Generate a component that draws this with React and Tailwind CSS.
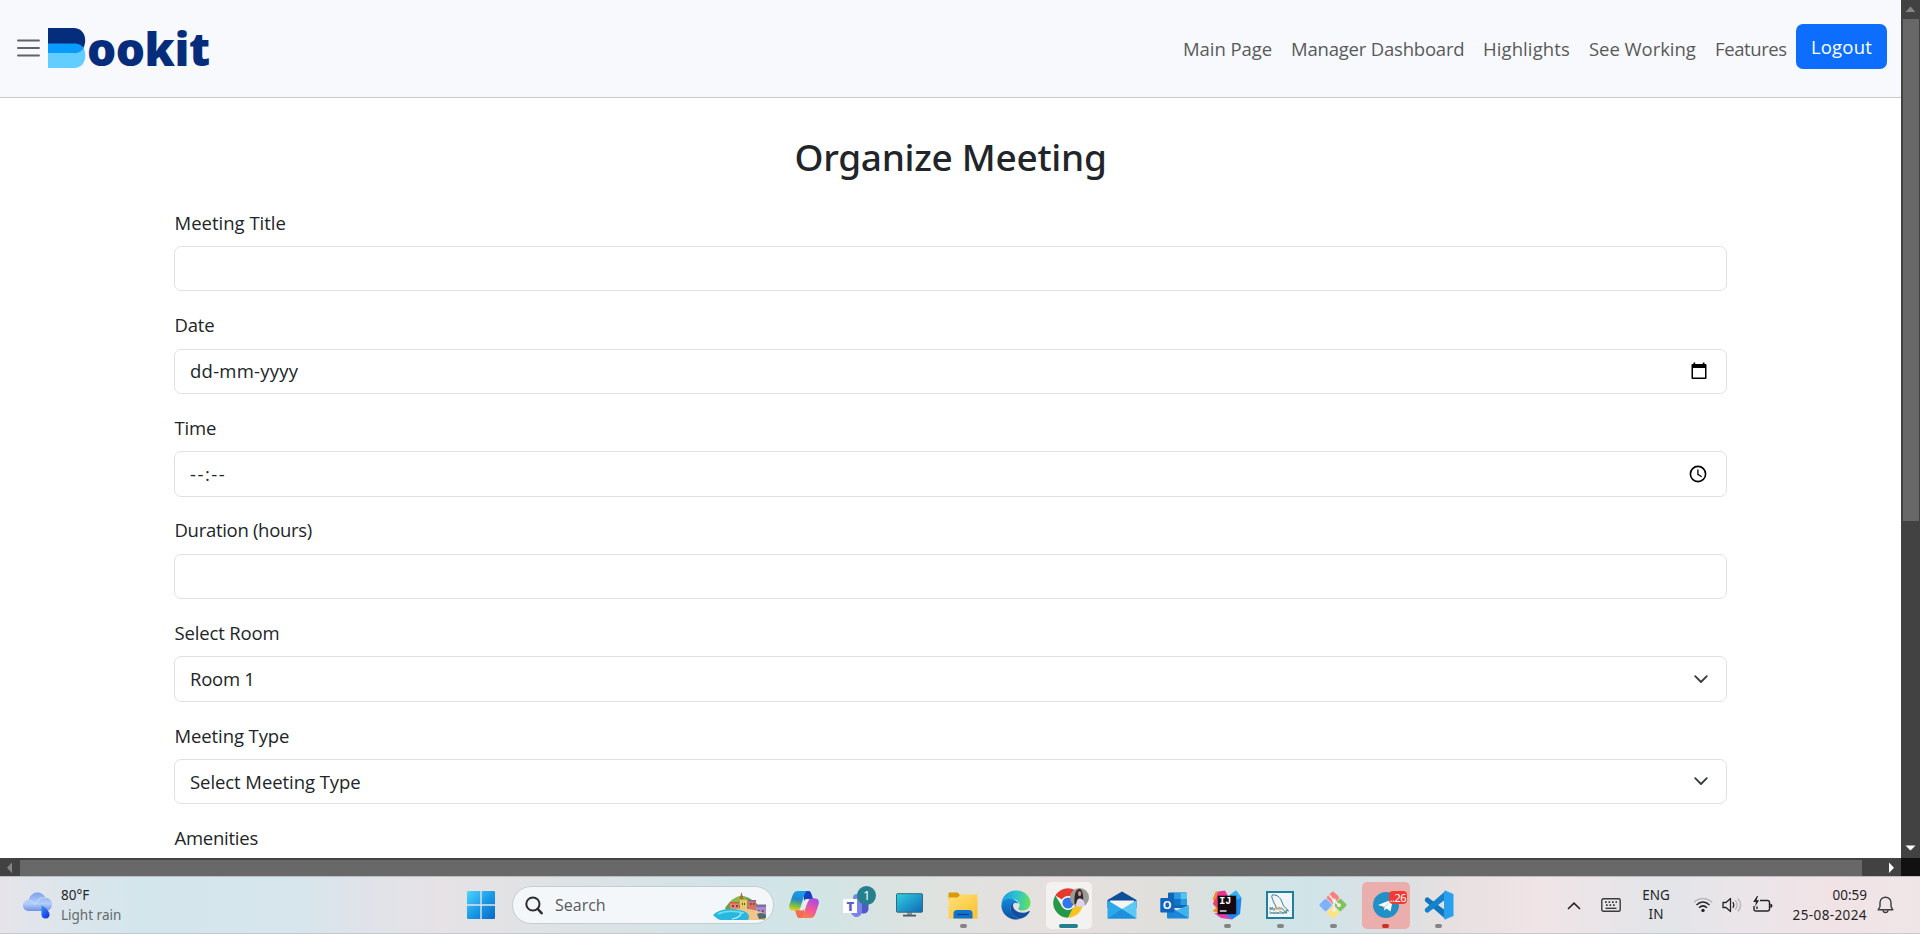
import React from "react";

/* ---------- page header ---------- */

function Logo() {
  return (
    <div className="-mt-[1px] flex items-center">
      <svg className="h-[40px] w-[38px] shrink-0" viewBox="0 0 38 40">
        <path d="M0 15H26C33 15 37.200 20 37.200 26.500V28C37.200 35 33 40 26 40H0Z" fill="#62cdff" />
        <path d="M0 0H25.500C33 0 37.200 5.500 37.200 12.500C37.200 19.500 33 25 25.500 25H0Z" fill="#062d7c" />
        <path d="M0 15.400H26C31 15.400 34.500 17.600 35.800 20.200C33.600 23.400 30 25 25.500 25H0Z" fill="#0a9bff" />
      </svg>
      <span className="ml-[1px] font-['Open_Sans',sans-serif] text-[46px] leading-[60px] font-extrabold tracking-[-0.5px] text-[#062d7c]">
        ookit
      </span>
    </div>
  );
}

function Header() {
  return (
    <header className="flex h-[98px] shrink-0 items-center justify-between border-b border-[#c9cacc] bg-[#f8f9fc] pr-[14px] pl-[17px]">
      <div className="flex items-center gap-[8px]">
        <svg className="-mt-[2px] h-[18px] w-[23px]" viewBox="0 0 23 18" stroke="#626366" strokeWidth="1.9" strokeLinecap="round">
          <path d="M1 1.500H22M1 9H22M1 16.500H22" />
        </svg>
        <Logo />
      </div>
      <nav className="flex items-center text-[18.5px] whitespace-nowrap text-[#58595b]">
        <span className="mt-[1px] w-[108px] tracking-[-0.05px]">Main Page</span>
        <span className="mt-[1px] w-[192px] tracking-[-0.2px]">Manager Dashboard</span>
        <span className="mt-[1px] w-[106px] tracking-[0.1px]">Highlights</span>
        <span className="mt-[1px] w-[126px] tracking-[-0.05px]">See Working</span>
        <span className="mt-[1px] w-[81px] tracking-[-0.4px]">Features</span>
        <button className="-mt-[4px] flex h-[45px] w-[91px] items-center justify-center rounded-[7px] bg-[#0d6efd] tracking-[0.2px] text-white">
          Logout
        </button>
      </nav>
    </header>
  );
}

/* ---------- form ---------- */

function Field({ label, labelClass = "", children }) {
  return (
    <div className="h-[102.6px] shrink-0">
      <div className={"h-[38.300px] pl-[0.5px] leading-[29px] whitespace-nowrap " + labelClass}>{label}</div>
      <div className="flex h-[45.500px] items-center justify-between rounded-[7px] border border-[#dee2e6] bg-white pl-[15px]">
        {children}
      </div>
    </div>
  );
}

function CalendarIcon() {
  return (
    <svg className="mr-[19px] h-[18px] w-[16px]" viewBox="0 0 16 18">
      <path d="M2.500 0.500H4.200V2H11.800V0.500H13.500V2H14.500Q15.500 2 15.500 3V16Q15.500 17 14.500 17H1.500Q0.500 17 0.500 16V3Q0.500 2 1.500 2H2.500ZM2 6V15.600H14V6Z" fillRule="evenodd" />
    </svg>
  );
}

function ClockIcon() {
  return (
    <svg className="mr-[19px] h-[18px] w-[18px]" viewBox="0 0 18 18" fill="none" stroke="#000" strokeWidth="1.6">
      <circle cx="9" cy="9" r="7.600" />
      <path d="M8.900 4.600V9.400L12.700 11.700" strokeWidth="1.300" />
    </svg>
  );
}

function SelectArrow() {
  return (
    <svg className="mr-[18px] h-[9px] w-[14px]" viewBox="0 0 14 9" fill="none" stroke="#343a40" strokeWidth="1.8" strokeLinecap="round" strokeLinejoin="round">
      <path d="M1.200 1.200L7 7L12.800 1.200" />
    </svg>
  );
}

function MeetingForm() {
  return (
    <main className="flex min-h-0 flex-1 flex-col overflow-hidden pt-[36px] pr-[174px] pl-[174px] text-[18.5px] text-[#212529]">
      <h1 className="mb-[28.700px] h-[45px] shrink-0 text-center font-['Noto_Sans',sans-serif] text-[37px] leading-[45px] font-medium tracking-[-0.3px]">
        Organize Meeting
      </h1>
      <Field label="Meeting Title" />
      <Field label="Date" labelClass="tracking-[-0.2px]">
        <span className="tracking-[0.25px]">dd-mm-yyyy</span>
        <CalendarIcon />
      </Field>
      <Field label="Time" labelClass="tracking-[-0.2px]">
        <span className="tracking-[1.500px]">--:--</span>
        <ClockIcon />
      </Field>
      <Field label="Duration (hours)" labelClass="tracking-[-0.3px]" />
      <Field label="Select Room" labelClass="tracking-[-0.15px]">
        <span className="tracking-[-0.25px]">Room 1</span>
        <SelectArrow />
      </Field>
      <Field label="Meeting Type" labelClass="tracking-[-0.1px]">
        <span className="tracking-[-0.07px]">Select Meeting Type</span>
        <SelectArrow />
      </Field>
      <div className="h-[34px] shrink-0 pl-[0.5px] leading-[29px] tracking-[-0.25px]">Amenities</div>
    </main>
  );
}

/* ---------- scrollbars ---------- */

function VerticalScrollbar() {
  return (
    <div className="flex w-[19px] shrink-0 flex-col items-center bg-[#424242]">
      <svg className="h-[19px] w-[19px] shrink-0" viewBox="0 0 19 19">
        <path d="M9.500 6.500L14.500 12H4.500Z" fill="#858585" />
      </svg>
      <div className="ml-[1px] h-[502px] w-[16px] bg-[#686868]" />
      <svg className="mt-auto h-[19px] w-[19px] shrink-0" viewBox="0 0 19 19">
        <path d="M4.500 6.500H14.500L9.500 11.500Z" fill="#fff" />
      </svg>
    </div>
  );
}

function HorizontalScrollbar() {
  return (
    <div className="flex h-[18px] shrink-0 bg-[#424242]">
      <svg className="h-[18px] w-[20px] shrink-0" viewBox="0 0 20 18">
        <path d="M12 4.500V15L7 9.700Z" fill="#858585" />
      </svg>
      <div className="mt-[2px] h-[16px] w-[1842px] bg-[#686868]" />
      <svg className="ml-auto h-[18px] w-[20px] shrink-0" viewBox="0 0 20 18">
        <path d="M8 4.500V15L13 9.700Z" fill="#fff" />
      </svg>
      <div className="w-[19px] bg-[#111]" />
    </div>
  );
}

/* ---------- taskbar ---------- */

function WeatherIcon() {
  return (
    <svg className="h-[29px] w-[31px]" viewBox="0 0 31 29">
      <defs>
        <linearGradient id="cloud" x1="0" y1="0" x2="0" y2="1">
          <stop offset="0" stopColor="#7ba3ec" />
          <stop offset="0.6" stopColor="#b3cdf9" />
          <stop offset="1" stopColor="#6f93e6" />
        </linearGradient>
        <linearGradient id="drop" x1="0" y1="0" x2="0.6" y2="1">
          <stop offset="0" stopColor="#3a9df0" />
          <stop offset="1" stopColor="#1838e8" />
        </linearGradient>
      </defs>
      <path d="M7 20C3 20 1 17.500 1 14.500C1 11 4 9 6.500 9C8 4 11.500 1.500 15.500 1.500C19.500 1.500 22.500 4 23.800 7C27.500 7 30 9.500 30 13.500C30 17.500 27 20 23.500 20Z" fill="url(#cloud)" />
      <path d="M2 12C6 8 12 10 13 14M14 13C15 8 20 6 24 7" stroke="#c9dcfb" strokeWidth="1.500" fill="none" opacity="0.600" />
      <path d="M19.500 14C24 17 27.500 20.500 27.500 23.500C27.500 26 26 27.500 23.500 27.500C21 27.500 19.500 26 19.500 23.500Z" fill="url(#drop)" />
    </svg>
  );
}

function WindowsIcon() {
  return (
    <svg className="h-[28px] w-[28px]" viewBox="0 0 28 28">
      <defs>
        <linearGradient id="win" gradientUnits="userSpaceOnUse" x1="0" y1="0" x2="28" y2="28">
          <stop offset="0" stopColor="#50d4fd" />
          <stop offset="0.5" stopColor="#1a9be8" />
          <stop offset="1" stopColor="#0669c8" />
        </linearGradient>
      </defs>
      <path d="M1 0H13.300V13.300H0V1Q0 0 1 0ZM14.700 0H27Q28 0 28 1V13.300H14.700ZM0 14.700H13.300V28H1Q0 28 0 27ZM14.700 14.700H28V27Q28 28 27 28H14.700Z" fill="url(#win)" />
    </svg>
  );
}

function TownIllustration() {
  return (
    <svg className="mt-[3px] h-[29px] w-[54px]" viewBox="0 0 54 29">
      <path d="M12 16C18 7 24 4 30 4C40 6 46 14 52 19V28H20Z" fill="#6f9e45" />
      <path d="M17 10C22 5 26 3.500 31 4L36 10L22 14Z" fill="#8db84c" />
      <path d="M28.500 0L30.500 7H26.500Z" fill="#b5683c" />
      <rect x="17" y="10" width="9" height="8" fill="#ec8367" />
      <path d="M17 10H26V11.500H17Z" fill="#c75c4a" />
      <rect x="27" y="8" width="7" height="10" fill="#f0c468" />
      <rect x="35" y="8" width="8" height="12" fill="#d97265" />
      <rect x="43" y="14" width="10" height="10" fill="#a48cc9" />
      <path d="M43 14L46 12.500H53V15H43ZM35 8H43V9.500H35Z" fill="#8268a8" />
      <path d="M19 13H21V15H19ZM23 13H25V15H23ZM29 11H30V13H29ZM31 11H32V13H31ZM37 11H38.500V13H37ZM40 11H41.500V13H40ZM45 18H46.500V20H45ZM49 18H50.500V20H49Z" fill="#6d4456" />
      <path d="M18 18C30 15 47 18 53 23V26Q52 28 49 28H32Z" fill="#eec68c" />
      <path d="M44 22C47 20 51 21 53 23V26Q50 27 46 27Z" fill="#4e6a75" />
      <path d="M0 23C6 17 17 16 26 18C34 19 38 23 35 28H8Q5 28 0 23Z" fill="#28b8df" />
      <path d="M5 22C13 18 23 19 31 21" stroke="#6be0f2" strokeWidth="1.500" fill="none" />
      <path d="M28 21C28 24 24 26 19 27" stroke="#c4f5fb" strokeWidth="1.200" fill="none" />
    </svg>
  );
}

function SearchBox() {
  return (
    <div className="flex h-[38px] w-[262px] items-center rounded-full border border-[#c3ced4] bg-[#f4f7f9] pr-[6px] pl-[12px]">
      <svg className="h-[19px] w-[18px]" viewBox="0 0 18 19" fill="none" stroke="#2c2d2f" strokeLinecap="round">
        <circle cx="7.900" cy="8" r="6.600" strokeWidth="2" />
        <path d="M12.800 13L16.600 17.200" strokeWidth="2.500" />
      </svg>
      <span className="ml-[12px] flex-1 text-[16px] text-[#58595b]">Search</span>
      <TownIllustration />
    </div>
  );
}

function CopilotIcon() {
  return (
    <svg className="mb-[2px] h-[27px] w-[30px]" viewBox="0 0 30 27">
      <defs>
        <linearGradient id="cpA" x1="0.3" y1="0" x2="0.1" y2="1">
          <stop offset="0" stopColor="#189bee" />
          <stop offset="0.4" stopColor="#2488cc" />
          <stop offset="0.7" stopColor="#74bb4c" />
          <stop offset="1" stopColor="#f5d514" />
        </linearGradient>
        <linearGradient id="cpB" x1="0.7" y1="0" x2="0.2" y2="1">
          <stop offset="0" stopColor="#a84be8" />
          <stop offset="0.5" stopColor="#f0569a" />
          <stop offset="1" stopColor="#fd8344" />
        </linearGradient>
      </defs>
      <path d="M14 0H19C22 0 22 2 23 4.500C23.500 7 24 8 26 8H20C17 8 16.500 9 15.500 12Z" fill="#1440c4" />
      <path d="M16 27H11C8 27 8 25 7 22.500C6.500 20 6 19 4 19H10C13 19 13.500 18 14.500 15Z" fill="#f26d52" />
      <path d="M9 0H19C16.500 0 16 2 15 5L11.500 16C10.700 18.500 9.500 19.500 7.500 19.500H4C0.500 19.500 -0.500 17 0.500 13.500L3.500 4.500C4.500 1.500 6 0 9 0Z" fill="url(#cpA)" />
      <path d="M21 27H11C13.500 27 14 25 15 22L18.500 11C19.300 8.500 20.500 7.500 22.500 7.500H26C29.500 7.500 30.500 10 29.500 13.500L26.500 22.500C25.500 25.500 24 27 21 27Z" fill="url(#cpB)" />
      <path d="M17.500 8H20.500L14 19.500C13 19.500 11.500 19.500 10.500 19.200L13 16C14.500 12 15 8 17.500 8Z" fill="#e6eef0" />
    </svg>
  );
}

function TeamsIcon() {
  return (
    <div className="relative h-[31px] w-[33px]">
      <svg className="h-[31px] w-[26px]" viewBox="0 0 26 31">
        <circle cx="14" cy="12" r="4" fill="#7b83eb" />
        <path d="M16 14H25.500V23C25.500 26.500 22 28.500 18 27Z" fill="#5059c9" />
        <path d="M8 14H19V24C19 28.500 16.500 31 13.500 31C10.500 31 8 28.500 8 25Z" fill="#7b83eb" />
        <rect x="0" y="13" width="14" height="14" fill="#fff" />
      </svg>
      <span className="absolute top-[13px] left-0 w-[14px] text-center text-[13px] leading-[14px] font-extrabold text-[#5a60c8]">T</span>
      <span className="absolute top-0 left-[14px] flex h-[19px] w-[19px] items-center justify-center rounded-full bg-[#25808e] text-[13px] leading-none text-white">
        1
      </span>
    </div>
  );
}

function MonitorIcon() {
  return (
    <svg className="mr-[2px] h-[24px] w-[27px]" viewBox="0 0 27 24">
      <defs>
        <linearGradient id="mon" x1="0" y1="0" x2="1" y2="1">
          <stop offset="0" stopColor="#2fd0df" />
          <stop offset="1" stopColor="#1068b8" />
        </linearGradient>
      </defs>
      <path d="M11 18H16V22H11Z" fill="#8a949c" />
      <path d="M7 21.700H20V23.500H7Z" fill="#4d5860" />
      <rect x="0.500" y="0.700" width="26" height="18.500" rx="0.800" fill="url(#mon)" stroke="#356a7c" />
    </svg>
  );
}

function FolderIcon() {
  return (
    <svg className="h-[27px] w-[30px]" viewBox="0 0 30 27">
      <defs>
        <linearGradient id="fold" x1="0" y1="0" x2="1" y2="1">
          <stop offset="0" stopColor="#ffe07a" />
          <stop offset="1" stopColor="#fcc02d" />
        </linearGradient>
      </defs>
      <path d="M0.500 1.500Q0.500 0.500 1.500 0.500H9.500L12.500 3.500V8H0.500Z" fill="#d99a06" />
      <path d="M0.500 5.500H9.500L12.500 2.500H29.500V26.500H0.500Z" fill="url(#fold)" />
      <path d="M5.500 26.500V21.500Q5.500 18 9 18H21Q24.500 18 24.500 21.500V26.500Z" fill="#0f74cc" />
      <path d="M9 22.500H21" stroke="#0a3f86" strokeWidth="1.200" />
    </svg>
  );
}

function EdgeIcon() {
  return (
    <svg className="h-[30px] w-[30px]" viewBox="0 0 30 30">
      <defs>
        <linearGradient id="edT" x1="0" y1="0.5" x2="1" y2="0.6">
          <stop offset="0" stopColor="#1a9fe0" />
          <stop offset="0.500" stopColor="#2cc3cf" />
          <stop offset="1" stopColor="#66e350" />
        </linearGradient>
        <linearGradient id="edB" x1="0" y1="0" x2="0" y2="1">
          <stop offset="0" stopColor="#1489d8" />
          <stop offset="1" stopColor="#0c4fa2" />
        </linearGradient>
      </defs>
      <path d="M0.500 14C1 6 7 0.500 15 0.500C24 0.500 29.500 7 29.500 13C29.500 17.500 26 20.500 21.500 20.500C18.500 20.500 17 19.300 17.500 18.300C19.500 16 18.800 11 14 9.500C9 8 3 9.500 0.500 14Z" fill="url(#edT)" />
      <path d="M0.500 15C1 10 6 8 11 9C14 9.600 16.500 11.500 17.500 13.500C12 11.500 8.500 16 10 21C11.500 26 16 29 20 28.500C17 30 12.500 30 9 28.300C3.500 25.800 0 20.500 0.500 15Z" fill="url(#edB)" />
      <path d="M12.800 12.700C9.500 14.500 9 18.500 10.200 21.800C11.500 26 16 29 20 28.500C24 27.500 27 24.800 28.500 22C29 21 28.300 20.700 27.500 21.200C21 25 12.500 21.500 12 16C11.900 14.600 12.200 13.600 12.800 12.700Z" fill="#1150a0" />
    </svg>
  );
}

function ChromeIcon() {
  return (
    <div className="relative h-[36px] w-[36px]">
      <svg className="mt-[6px] h-[30px] w-[30px]" viewBox="0 0 30 30">
        <path d="M15 15L2.300 7.600A14.700 14.700 0 0 1 27.700 7.600Z" fill="#e33b2e" />
        <path d="M15 8.300H28.100A14.700 14.700 0 0 1 15 29.700L20.800 18.400Z" fill="#fcc31e" />
        <path d="M2.300 7.600L9.200 18.400L15 22L20.800 18.400L15 29.700A14.700 14.700 0 0 1 2.300 7.600Z" fill="#279847" />
        <circle cx="15" cy="15" r="7" fill="#fff" />
        <circle cx="15" cy="15" r="5.600" fill="#2f78ec" />
      </svg>
      <svg className="absolute top-0 left-[17px] h-[19px] w-[19px]" viewBox="0 0 19 19">
        <defs>
          <clipPath id="avatar">
            <circle cx="9.500" cy="9.500" r="9.500" />
          </clipPath>
        </defs>
        <g clipPath="url(#avatar)">
          <rect width="19" height="19" fill="#9b9a96" />
          <path d="M4.500 16C4 9 5 1.500 9.500 1C13 1.500 13.500 9 13 14Z" fill="#2f2629" />
          <ellipse cx="9.600" cy="5.600" rx="1.700" ry="2.600" fill="#bd9484" />
          <path d="M6 19C6 13 7.500 10.500 10 10.500C13 10.500 15 14 15 19Z" fill="#ded3e8" />
        </g>
      </svg>
    </div>
  );
}

function MailIcon() {
  return (
    <svg className="h-[28px] w-[30px]" viewBox="0 0 30 28">
      <path d="M0.500 9L15 0.500L29.500 9V17H0.500Z" fill="#0f4e96" />
      <path d="M3 9.500H27V18L15 24L3 18Z" fill="#f3f5f6" />
      <path d="M0.500 9.300L15 18L29.500 27.500H0.500Z" fill="#2ba8ea" />
      <path d="M29.500 9.300V27.500L15 18Z" fill="#5cc9f5" />
      <path d="M0.500 27.500L15 18L29.500 27.500Z" fill="#1e8fdb" />
    </svg>
  );
}

function OutlookIcon() {
  return (
    <div className="relative h-[27px] w-[29px]">
      <svg className="h-[27px] w-[29px]" viewBox="0 0 29 27">
        <path d="M8 1.500Q8 0.500 9 0.500H26Q27 0.500 27 1.500V16H8Z" fill="#1066b5" />
        <path d="M14 1H20.500V7H14Z" fill="#2a9be3" />
        <path d="M20.500 1H27V7H20.500Z" fill="#50c4f5" />
        <path d="M14 7H20.500V13H14Z" fill="#1373c4" />
        <path d="M20.500 7H27V13H20.500Z" fill="#2a9be3" />
        <path d="M7 13L18 19.500L28.500 13V26Q28.500 26.500 28 26.500H8Q7 26.500 7 25.500Z" fill="#1c87d8" />
        <path d="M28.500 13V26L16 18.500Z" fill="#3fb5f0" />
        <rect x="0.300" y="6" width="14" height="14.500" rx="1" fill="#0f65bd" />
      </svg>
      <span className="absolute top-[6px] left-0 w-[14.5px] text-center text-[11px] leading-[14px] font-bold text-white">O</span>
    </div>
  );
}

function IntelliJIcon() {
  return (
    <div className="relative h-[30px] w-[30px]">
      <svg className="h-[30px] w-[30px]" viewBox="0 0 30 30">
        <path d="M4 1L13 6L9 24L0.500 21L4 18L1 14L3 11L0.500 9Z" fill="#f58a2a" />
        <path d="M6 1.500L13 0.500L17 8L10 13L4 9Z" fill="#e8368e" />
        <path d="M2 10L8 6V20L1 14Z" fill="#ef3f6e" />
        <path d="M18 5L24 0.500L29.500 8L28 24L20 29.500L12 24Z" fill="#1e86ee" />
        <path d="M18 5L24 0.500L29.500 8L24 10Z" fill="#35b3f4" />
        <path d="M2 23L13 24L20 29.500L9 28Z" fill="#e33ab1" />
        <rect x="5.700" y="5.700" width="18.500" height="18.500" fill="#120a10" />
        <path d="M7.800 21H14.500" stroke="#fff" strokeWidth="1.300" />
      </svg>
      <span className="absolute top-[7px] left-[7px] font-['Liberation_Mono',monospace] text-[10px] leading-[10px] font-bold text-white">
        IJ
      </span>
    </div>
  );
}

function MySqlIcon() {
  return (
    <div className="relative h-[28px] w-[28px] border-2 border-[#20809a] bg-[#eff5f8]">
      <svg className="h-[24px] w-[24px]" viewBox="0 0 25 25" fill="none" stroke="#31758c" strokeWidth="1">
        <path d="M4.500 2C8 1.500 11.500 3.500 13.500 7C15 10 15.500 13 17.500 15L21.500 18.500L18.500 18.500L19.500 21C17 20 16 16.500 14 15.500C13 17 12.500 16 12 15C10.500 16 9.500 17 8.500 15.500C8.500 13 6 11 5.500 8.500C5 6 3 4.500 4.500 2Z" />
      </svg>
      <span className="absolute bottom-[2px] left-[1px] text-[4px] leading-[4px] font-bold text-[#2e7087]">
        My<span className="text-[#e39a35]">SQL</span>
        <br />
        Installer
      </span>
    </div>
  );
}

function GitIcon() {
  return (
    <svg className="h-[30px] w-[30px]" viewBox="0 0 30 30">
      <g transform="rotate(45 15 15)">
        <rect x="5" y="5" width="9.600" height="9.600" rx="1.500" fill="#fb7f7f" />
        <rect x="15.400" y="5" width="9.600" height="9.600" rx="1.500" fill="#80c25d" />
        <rect x="5" y="15.400" width="9.600" height="9.600" rx="1.500" fill="#82b0fb" />
        <rect x="15.400" y="15.400" width="9.600" height="9.600" rx="1.500" fill="#fde382" />
      </g>
      <path d="M11 5L16 10.500V20M16 11L21 15" stroke="#eef0e8" strokeWidth="1.700" fill="none" />
      <circle cx="16" cy="10.500" r="1.900" fill="#eef0e8" />
      <circle cx="21" cy="15.200" r="1.900" fill="#eef0e8" />
      <circle cx="16" cy="20" r="1.900" fill="#eef0e8" />
    </svg>
  );
}

function TelegramIcon() {
  return (
    <div className="relative h-[30px] w-[34px]">
      <svg className="mt-[1px] h-[28px] w-[28px]" viewBox="0 0 28 28">
        <circle cx="14" cy="14" r="13" fill="#2290c4" />
        <path d="M6 14L21 8L18.500 20.500L14.500 17.500L12.500 19.500L11.700 15.700Z" fill="#fff" />
        <path d="M11.700 15.700L18 10.500L13.200 16.300L12.500 19.500Z" fill="#b9d8e8" />
      </svg>
      <span className="absolute top-0 left-[17px] flex h-[13px] w-[18px] items-center justify-center rounded-[4px] bg-[#f23a35] font-['Noto_Sans',sans-serif] text-[11px] leading-none tracking-[-0.5px] text-white">
        ..26
      </span>
    </div>
  );
}

function VsCodeIcon() {
  return (
    <svg className="h-[30px] w-[30px]" viewBox="0 0 30 30">
      <path d="M1 8.500L3.500 7L22 21V29.500L0.800 11Z" fill="#1177bd" />
      <path d="M1 21.500L3.500 23L22 9V0.500L0.800 19Z" fill="#1383cc" />
      <path d="M21 0.500L29.500 4V26L21 29.500Q20 29 20 27V3Q20 1 21 0.500Z" fill="#28a0ee" />
    </svg>
  );
}

function AppCell({ children, dot = "", tile = "" }) {
  return (
    <div className="flex w-[52.870px] justify-center">
      <div className={"relative flex h-[47px] items-center justify-center rounded-[5px] " + (tile || "w-[46px]")}>
        {children}
        {dot && <span className={"absolute bottom-[0.5px] h-[4px] rounded-full " + dot} />}
      </div>
    </div>
  );
}

const greyDot = "w-[7px] bg-[#838483]";

function Tray() {
  return (
    <div className="flex flex-1 items-center justify-end pr-[26px] font-['Noto_Sans',sans-serif] text-[13.500px] leading-[19px] text-[#232426]">
      <svg className="mt-[1px] h-[8px] w-[14px]" viewBox="0 0 14 8" fill="none" stroke="#232426" strokeWidth="1.600">
        <path d="M1 7L7 1.200L13 7" />
      </svg>
      <svg className="ml-[20px] h-[14px] w-[20px]" viewBox="0 0 20 14" fill="none" stroke="#3a3b3d" strokeWidth="1.400">
        <rect x="0.800" y="0.800" width="18.400" height="12.400" rx="1.500" />
        <path d="M4 4.200H16M5 7.200H15" strokeWidth="1.700" strokeDasharray="1.700 1.800" />
        <path d="M4.500 10.300H15.500" />
      </svg>
      <div className="ml-[20px] w-[31px] text-center">
        ENG
        <br />
        IN
      </div>
      <svg className="ml-[21px] h-[16px] w-[20px]" viewBox="0 0 20 16" fill="none" strokeWidth="1.400">
        <path d="M1 5.500C6 0.200 14 0.200 19 5.500" stroke="#b9b9bc" />
        <path d="M3.500 8C7.500 4 12.500 4 16.500 8M6 10.800C8.500 8.300 11.500 8.300 14 10.800" stroke="#232426" />
        <circle cx="10" cy="13.400" r="1.700" fill="#232426" />
      </svg>
      <svg className="ml-[9px] h-[16px] w-[20px]" viewBox="0 0 20 16" fill="none" strokeWidth="1.300" strokeLinejoin="round">
        <path d="M1 5.500H4L8.500 1.500V14.500L4 10.500H1Z" stroke="#232426" />
        <path d="M10.700 5.200C12.200 6.600 12.200 9.400 10.700 10.800" stroke="#232426" />
        <path d="M13.200 3.500C15.800 6 15.800 10 13.200 12.500M15.800 1.500C19.500 5 19.500 11 15.800 14.500" stroke="#b4b4b6" />
      </svg>
      <svg className="mb-[2px] ml-[10px] h-[17px] w-[21px]" viewBox="0 0 21 17" fill="none" stroke="#232426" strokeWidth="1.400">
        <path d="M8 4.500H15.500Q17.500 4.500 17.500 6.500V13Q17.500 15 15.500 15H4Q2 15 2 13V10" />
        <path d="M18.300 7.500Q20.500 8 20.500 9.700Q20.500 11.500 18.300 12Z" fill="#232426" stroke="none" />
        <path d="M5 0L1.200 6H4L3 10.500L7.200 4.300H4.600L6 0Z" fill="#232426" stroke="none" />
        <path d="M5 10.500V13" />
      </svg>
      <div className="ml-[20px] text-right leading-[20px]">
        <div>00:59</div>
        <div className="tracking-[0.4px]">25-08-2024</div>
      </div>
      <svg className="ml-[10px] h-[18px] w-[17px]" viewBox="0 0 17 18" fill="none" stroke="#3a3b3d" strokeWidth="1.400" strokeLinejoin="round">
        <path d="M8.500 1.200C5.300 1.200 3 3.700 3 6.800V10.500L1.200 13.800H15.800L14 10.500V6.800C14 3.700 11.700 1.200 8.500 1.200Z" />
        <path d="M6 14.300C6.300 17.300 10.700 17.300 11 14.300" />
      </svg>
    </div>
  );
}

function Taskbar() {
  return (
    <footer className="flex h-[58px] shrink-0 items-center border-t border-b border-t-[#bcbfc0] border-b-[#c3cacd] bg-[linear-gradient(90deg,#e6e4ea_0px,#dbe6ec_70px,#d3e6ec_140px,#d6e6ec_300px,#dfe3e9_365px,#e6e2e6_440px,#dfe2e4_560px,#d0e4e8_740px,#d3e4e4_830px,#dfe2df_940px,#e6e0de_1060px,#e0dfdb_1160px,#d4e3e3_1240px,#d0e4e8_1310px,#dce0e2_1400px,#e8e0e1_1460px,#f0e4e6_1540px,#e3e5e9_1660px,#eae5e9_1740px,#f1e3e5_1830px,#efe5e7_1920px)]">
      <div className="flex w-[467px] items-center pl-[22px]">
        <WeatherIcon />
        <div className="ml-[8px] font-['Noto_Sans',sans-serif] text-[13.500px] leading-[20px]">
          <div className="text-[#232426]">80°F</div>
          <div className="text-[#66696c]">Light rain</div>
        </div>
      </div>
      <WindowsIcon />
      <div className="ml-[17px]">
        <SearchBox />
      </div>
      <div className="ml-[4px] flex">
        <AppCell><CopilotIcon /></AppCell>
        <AppCell><div className="mb-[7px] ml-[5px]"><TeamsIcon /></div></AppCell>
        <AppCell><MonitorIcon /></AppCell>
        <AppCell dot={greyDot}><FolderIcon /></AppCell>
        <AppCell><EdgeIcon /></AppCell>
        <AppCell tile="w-[46px] bg-[#f3f2f1]" dot="w-[19px] bg-[#25808e]">
          <div className="mb-[4px] ml-[5px]"><ChromeIcon /></div>
        </AppCell>
        <AppCell><MailIcon /></AppCell>
        <AppCell><OutlookIcon /></AppCell>
        <AppCell dot={greyDot}><IntelliJIcon /></AppCell>
        <AppCell dot={greyDot}><MySqlIcon /></AppCell>
        <AppCell dot={greyDot}><GitIcon /></AppCell>
        <AppCell tile="w-[48px] bg-[#eaaeac]" dot="w-[7px] bg-[#c82f25]">
          <div className="ml-[6px]"><TelegramIcon /></div>
        </AppCell>
        <AppCell dot={greyDot}><VsCodeIcon /></AppCell>
      </div>
      <Tray />
    </footer>
  );
}

export default function App() {
  return (
    <div className="flex h-[934px] w-[1920px] flex-col overflow-hidden bg-white font-['Open_Sans',sans-serif]">
      <div className="flex h-[858px] shrink-0">
        <div className="flex min-w-0 flex-1 flex-col">
          <Header />
          <MeetingForm />
        </div>
        <VerticalScrollbar />
      </div>
      <HorizontalScrollbar />
      <Taskbar />
    </div>
  );
}
